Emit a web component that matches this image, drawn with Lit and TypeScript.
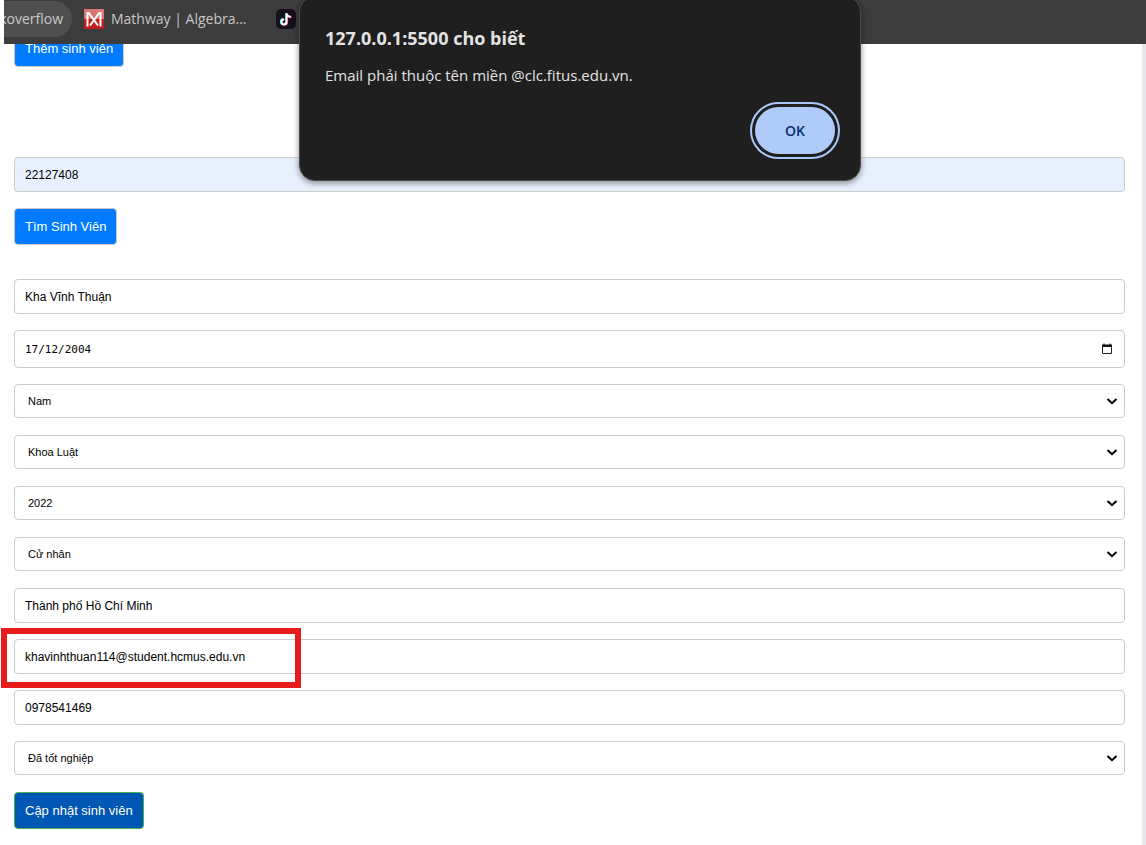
import { LitElement, html, css, svg } from "lit";
import { customElement, property } from "lit/decorators.js";

const chevron = svg`<path d="M1.5 2l4.5 4.200L10.500 2" fill="none" stroke="#000" stroke-width="2"/>`;

@customElement("bookmark-bar")
class BookmarkBar extends LitElement {
  static styles = css`
    :host { display: block; }
    nav {
      display: flex; align-items: center; height: 44px; box-sizing: border-box;
      margin-left: 4px; padding-bottom: 6px; background: #3c3c3c; overflow: hidden;
      font: 14px/20px "Open Sans", "Noto Sans", sans-serif;
    }
    a { display: flex; align-items: center; color: #c7c7c7; text-decoration: none; white-space: nowrap; flex: none; }
    .pill {
      background: #4f4f4f; width: 68px; height: 36px; box-sizing: border-box; padding-right: 9px;
      justify-content: flex-end; border-radius: 0 18px 18px 0; overflow: hidden;
    }
    .mathway { margin-left: 12px; gap: 7px; }
    .tiktok { margin-left: 29px; }
    svg { display: block; }
  `;
  render() {
    return html`<nav aria-label="Bookmarks">
      <a class="pill" href="#">koverflow</a>
      <a class="mathway" href="#">
        <svg width="20" height="20" viewBox="0 0 20 20" aria-hidden="true">
          <rect width="20" height="20" rx="1" fill="#c01f1f"/>
          <path d="M0 1a1 1 0 0 1 1-1h18a1 1 0 0 1 1 1v9H0z" fill="#dd7474"/>
          <path d="M3.500 17.500V4h1.300L14 16.500M6 16.500L15.200 4h1.300v13.500" fill="none" stroke="#fff" stroke-width="2"/>
        </svg>Mathway | Algebra...</a>
      <a class="tiktok" href="#" aria-label="TikTok">
        <svg width="20" height="20" viewBox="0 0 20 20" aria-hidden="true">
          <rect width="20" height="20" rx="5" fill="#17101a"/>
          <g fill="none" stroke-width="1.800">
            <path d="M10 4v8.500a2.600 2.600 0 1 1-2.600-2.600M10 4c.3 2.200 1.700 3.400 4.300 3.500" stroke="#25f4ee"/>
            <path d="M11.200 4.800v8.500a2.600 2.600 0 1 1-2.600-2.600M11.200 4.800c.3 2.200 1.700 3.400 4.300 3.500" stroke="#fe2c55"/>
            <path d="M10.600 4.300v8.600A2.600 2.600 0 1 1 8 10.300M10.600 4.300c.3 2.200 1.700 3.400 4.300 3.500" stroke="#fff"/>
          </g>
        </svg></a>
    </nav>`;
  }
}

@customElement("alert-dialog")
class AlertDialog extends LitElement {
  @property() heading = "";
  @property() message = "";
  static styles = css`
    :host { display: block; }
    section {
      box-sizing: border-box; padding: 28px 20px 21px 25px; color: #e3e3e3;
      background: #1f1f1f; border: 1px solid #4b4b4b; border-radius: 16px;
      box-shadow: 0 2px 6px rgba(0, 0, 0, .45);
      font: 15px/24px "Open Sans", "Noto Sans", sans-serif;
    }
    h1 { margin: 0; font-size: 18px; line-height: 26px; font-weight: 700; }
    p { margin: 12px 0 15px; }
    footer { display: flex; justify-content: flex-end; }
    button {
      width: 90px; height: 57px; border: 2px solid #a8c7fa; border-radius: 29px; padding: 3px;
      background: #1f1f1f; color: #062e6f; font: 600 14px/20px "Open Sans", sans-serif;
    }
    span { display: grid; place-items: center; height: 47px; border-radius: 24px; background: #aecbfa; }
  `;
  render() {
    return html`<section role="alertdialog" aria-labelledby="t" aria-describedby="m">
      <h1 id="t">${this.heading}</h1>
      <p id="m">${this.message}</p>
      <footer><button type="button"><span>OK</span></button></footer>
    </section>`;
  }
}

@customElement("app-root")
class AppRoot extends LitElement {
  static styles = css`
    :host { display: block; position: relative; min-height: 100vh; background: #fff; overflow: hidden; }
    main {
      min-height: calc(100vh - 44px); box-sizing: border-box; padding: 0 17px 15px 14px;
      border-right: 4px solid #e6e6eb; overflow: hidden;
      font-family: "Liberation Sans", Arial, sans-serif;
    }
    form { display: flex; flex-direction: column; align-items: flex-start; }
    .scrolled { margin-top: -14px; }
    .search { margin-top: 90px; }
    .edit { margin-top: 34px; }
    input, select {
      display: block; width: 100%; height: 35px; box-sizing: border-box; margin: 0; padding: 0 10px;
      border: 1px solid #ccc; border-radius: 4px; background: #fff; color: #000;
      font: 12px "Liberation Sans", Arial, sans-serif; outline: none;
    }
    .field { position: relative; width: 100%; margin-bottom: 16px; }
    .choice { margin-bottom: 17px; }
    select { appearance: none; height: 34px; padding: 0 13px; font-size: 11px; }
    .filled { background: #e8f0fe; }
    .date { height: 38px; font: 11px "DejaVu Sans Mono", monospace; }
    .arrow { position: absolute; right: 7px; top: 13px; pointer-events: none; }
    .picker { position: absolute; right: 12px; top: 13px; padding: 0; border: 0; background: none; height: 12px; }
    .picker svg { display: block; }
    .action {
      height: 37px; padding: 0 10px; border: 1px solid #ccc; border-radius: 4px;
      background: #007bff; color: #fff; font: 13px "Liberation Sans", Arial, sans-serif;
    }
    .update { background: #0056b3; border-color: #4caf50; }
    .marker { position: absolute; left: -13px; top: -11px; width: 300px; height: 60px; box-sizing: border-box; border: 6px solid #e71d1d; pointer-events: none; }
    .popup { position: absolute; top: -4px; left: calc(50% - 274px); width: 562px; }
  `;
  text(label: string, value: string, marked = false) {
    return html`<div class="field">
      <input type="text" aria-label=${label} .value=${value}>
      ${marked ? html`<div class="marker"></div>` : ""}
    </div>`;
  }
  choice(label: string, value: string) {
    return html`<div class="field choice">
      <select aria-label=${label}><option>${value}</option></select>
      <svg class="arrow" width="12" height="9" viewBox="0 0 12 9" aria-hidden="true">${chevron}</svg>
    </div>`;
  }
  render() {
    return html`
      <bookmark-bar></bookmark-bar>
      <main>
        <form class="scrolled"><button class="action" type="button">Thêm sinh viên</button></form>
        <form class="search">
          <div class="field"><input class="filled" type="text" aria-label="MSSV" .value=${"22127408"}></div>
          <button class="action" type="button">Tìm Sinh Viên</button>
        </form>
        <form class="edit">
          ${this.text("Họ tên", "Kha Vĩnh Thuận")}
          <div class="field">
            <input class="date" type="text" aria-label="Ngày sinh" .value=${"17/12/2004"}>
            <button class="picker" type="button" aria-label="Chọn ngày">
              <svg width="12" height="12" viewBox="0 0 12 12"><path d="M1.500 2.500h9v8h-9z" fill="none" stroke="#222"/><path d="M1 1.500h10V4H1zM2.500.5h1v1h-1zM8.500.5h1v1h-1z" fill="#111"/></svg>
            </button>
          </div>
          ${this.choice("Giới tính", "Nam")}
          ${this.choice("Khoa", "Khoa Luật")}
          ${this.choice("Khóa", "2022")}
          ${this.choice("Chương trình", "Cử nhân")}
          ${this.text("Địa chỉ", "Thành phố Hồ Chí Minh")}
          ${this.text("Email", "khavinhthuan114@student.hcmus.edu.vn", true)}
          ${this.text("Số điện thoại", "0978541469")}
          ${this.choice("Tình trạng", "Đã tốt nghiệp")}
          <button class="action update" type="button">Cập nhật sinh viên</button>
        </form>
      </main>
      <alert-dialog class="popup" heading="127.0.0.1:5500 cho biết" message="Email phải thuộc tên miền @clc.fitus.edu.vn."></alert-dialog>
    `;
  }
}
